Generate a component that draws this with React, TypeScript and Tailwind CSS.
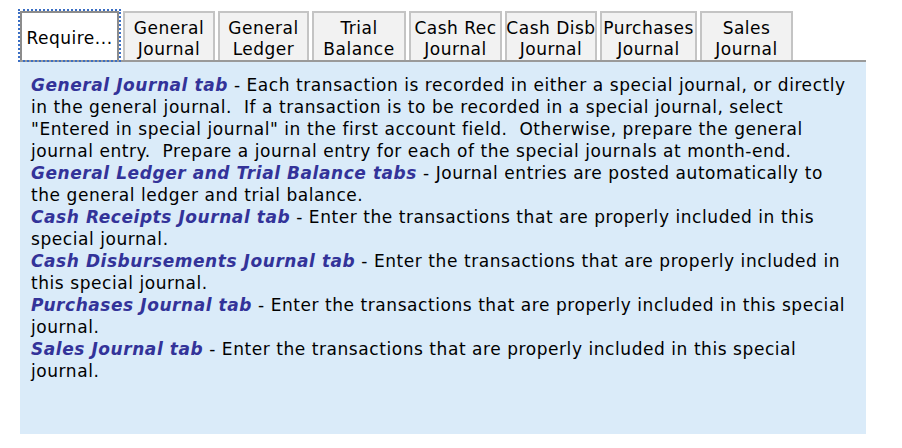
import React from "react";

const tabs = [
  { l1: "General", l2: "Journal", w: "w-[92px]" },
  { l1: "General", l2: "Ledger", w: "w-[91px]" },
  { l1: "Trial", l2: "Balance", w: "w-[94px]" },
  { l1: "Cash Rec", l2: "Journal", w: "w-[93px]" },
  { l1: "Cash Disb", l2: "Journal", w: "w-[92px]" },
  { l1: "Purchases", l2: "Journal", w: "w-[97px]" },
  { l1: "Sales", l2: "Journal", w: "w-[93px]" },
];

function H({ children }: { children: React.ReactNode }) {
  return <span className="font-bold italic text-[#333399]">{children}</span>;
}

export default function App() {
  return (
    <div className="w-[902px] h-[448px] bg-white" style={{ fontFamily: '"DejaVu Sans", Verdana, sans-serif' }}>
      <div className="pl-[20px] pt-[11px] w-[866px]">
        <div className="flex items-end gap-[3px] h-[49px]">
          <div className="w-[99px] h-[49px] mr-[1px] outline-dotted outline-2 outline-[#3b6fc4] border-2 border-[#8c8c8c] border-b-0 bg-white flex items-center justify-center pt-[5px] text-[17px] tracking-[0.5px] text-black whitespace-nowrap">
            Require...
          </div>
          {tabs.map((t, i) => (
            <div
              key={i}
              className={`${t.w} h-[49px] border-2 border-b-0 border-[#c4c4c4] bg-[#f2f2f2] flex flex-col items-center justify-end text-[17px] tracking-[0.5px] leading-[21px] text-black whitespace-nowrap`}
            >
              <span>{t.l1}</span>
              <span>{t.l2}</span>
            </div>
          ))}
        </div>
        <div className="h-[2px] bg-[#9a9a9a]" />
        <div className="h-[372px] bg-[#daebf9] px-[11px] pt-[12px] text-[17px] tracking-[0.56px] leading-[22px] text-black">
          <div className="whitespace-nowrap">
            <H>General Journal tab</H> - Each transaction is recorded in either a special journal, or directly
            <br />
            in the general journal.&nbsp; If a transaction is to be recorded in a special journal, select
            <br />
            "Entered in special journal" in the first account field.&nbsp; Otherwise, prepare the general
            <br />
            journal entry.&nbsp; Prepare a journal entry for each of the special journals at month-end.
            <br />
            <H>General Ledger and Trial Balance tabs</H> - Journal entries are posted automatically to
            <br />
            the general ledger and trial balance.
            <br />
            <H>Cash Receipts Journal tab</H> - Enter the transactions that are properly included in this
            <br />
            special journal.
            <br />
            <H>Cash Disbursements Journal tab</H> - Enter the transactions that are properly included in
            <br />
            this special journal.
            <br />
            <H>Purchases Journal tab</H> - Enter the transactions that are properly included in this special
            <br />
            journal.
            <br />
            <H>Sales Journal tab</H> - Enter the transactions that are properly included in this special
            <br />
            journal.
          </div>
        </div>
      </div>
    </div>
  );
}
